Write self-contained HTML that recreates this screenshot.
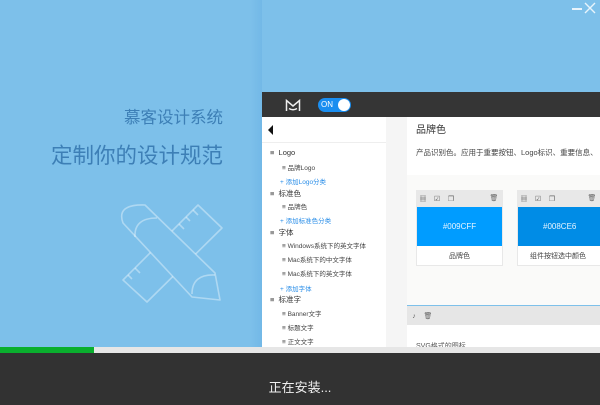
<!DOCTYPE html>
<html><head><meta charset="utf-8"><style>
*{margin:0;padding:0;box-sizing:border-box}
body{width:600px;height:405px;overflow:hidden;position:relative;background:#7dc0ea;font-family:"Liberation Sans","Noto Sans CJK SC",sans-serif}
.a{position:absolute}
.t1{right:377px;top:104px;font-size:16.5px;color:#3d7fb6;white-space:nowrap}
.t2{right:377px;top:139px;font-size:21.5px;color:#3d7fb6;white-space:nowrap}
.sb div{position:absolute;font-size:6.5px;color:#444;white-space:nowrap}
.sb .l1{left:270px;font-size:7.5px;color:#333}
.sb .l2{left:282px}
.sb .add{left:280px;color:#2a8ee8}
.ic{display:inline-block;font-size:7px;color:#666;width:14px;text-align:center}
</style></head><body>
<div class="a" style="left:250px;top:0;width:12px;height:347px;background:linear-gradient(90deg,rgba(100,175,225,0),rgba(95,170,225,.35))"></div>
<div class="a t1">慕客设计系统</div>
<div class="a t2">定制你的设计规范</div>
<svg class="a" style="left:0;top:0" width="260" height="347">
<g fill="none" stroke="rgba(255,255,255,.38)" stroke-width="1.6" stroke-linejoin="round">
<polygon points="198,205 222,228 147,302 123,280"/>
<path d="M193,210 l5,5 M186,217 l4,4 M179,224 l5,5 M135,268 l5,5 M128,275 l4,4"/>
<path d="M123,223 Q116,204 145,205 L215,273 L220,300 L192,297 Z" fill="#7dc0ea"/>
<path d="M135,237 Q134,218 157,218"/>
<path d="M192,294 Q192,274 215,275"/>
</g></svg>
<div class="a" style="left:572px;top:8px;width:10px;height:1.5px;background:#e8f4fc"></div>
<svg class="a" style="left:584px;top:2px" width="12" height="12"><path d="M1,1 L11,11 M11,1 L1,11" stroke="#e8f4fc" stroke-width="1.4"/></svg>
<!-- screenshot -->
<div class="a" style="left:262px;top:92px;width:338px;height:25px;background:#353535"></div>
<svg class="a" style="left:285px;top:99px" width="16" height="13"><path d="M1.5,12 V1.5 L8,7 L14.5,1.5 V12 M4,9.5 Q8,12 12,9.5" fill="none" stroke="#eee" stroke-width="1.5"/></svg>
<div class="a" style="left:318px;top:98px;width:33px;height:14px;border-radius:7px;background:#1a8ef0"></div>
<div class="a" style="left:321px;top:100px;font-size:8px;color:#fff">ON</div>
<div class="a" style="left:338px;top:99px;width:12px;height:12px;border-radius:6px;background:#fff"></div>
<div class="a" style="left:262px;top:117px;width:124px;height:230px;background:#fff"></div>
<div class="a" style="left:386px;top:117px;width:21px;height:230px;background:#f5f5f5"></div>
<div class="a" style="left:262px;top:142px;width:124px;height:1px;background:#eee"></div>
<svg class="a" style="left:268px;top:125px" width="6" height="10"><path d="M5,0 L0,5 L5,10Z" fill="#111"/></svg>
<div class="sb">
<div class="l1" style="top:148px">≡&nbsp;&nbsp;Logo</div>
<div class="l2" style="top:162px">≡ 品牌Logo</div>
<div class="add" style="top:176px">+ 添加Logo分类</div>
<div class="l1" style="top:188px">≡&nbsp;&nbsp;标准色</div>
<div class="l2" style="top:201px">≡ 品牌色</div>
<div class="add" style="top:215px">+ 添加标准色分类</div>
<div class="l1" style="top:227px">≡&nbsp;&nbsp;字体</div>
<div class="l2" style="top:240px">≡ Windows系统下的英文字体</div>
<div class="l2" style="top:254px">≡ Mac系统下的中文字体</div>
<div class="l2" style="top:268px">≡ Mac系统下的英文字体</div>
<div class="add" style="top:283px">+ 添加字体</div>
<div class="l1" style="top:294px">≡&nbsp;&nbsp;标准字</div>
<div class="l2" style="top:308px">≡ Banner文字</div>
<div class="l2" style="top:322px">≡ 标题文字</div>
<div class="l2" style="top:336px">≡ 正文文字</div>
</div>
<div class="a" style="left:407px;top:117px;width:193px;height:58px;background:#fff"></div>
<div class="a" style="left:407px;top:175px;width:193px;height:130px;background:#fafaf9"></div>
<div class="a" style="left:416px;top:121px;font-size:10px;color:#333">品牌色</div>
<div class="a" style="left:416px;top:147px;font-size:7.5px;color:#444;white-space:nowrap">产品识别色。应用于重要按钮、Logo标识、重要信息、</div>
<div class="a" style="left:416px;top:190px;width:87px;height:76px;background:#fff;border:1px solid #e8e8e8"></div>
<div class="a" style="left:416px;top:190px;width:87px;height:17px;background:#e8e8e8;font-size:8px;line-height:17px"><span class="ic">▦</span><span class="ic">☑</span><span class="ic">❐</span><span class="ic" style="position:absolute;right:2px">🗑</span></div>
<div class="a" style="left:417px;top:207px;width:85px;height:39px;background:#009cff;color:#e6f4ff;font-size:8px;text-align:center;line-height:39px">#009CFF</div>
<div class="a" style="left:417px;top:251px;width:85px;font-size:7px;color:#444;text-align:center">品牌色</div>
<div class="a" style="left:517px;top:190px;width:90px;height:76px;background:#fff;border:1px solid #e8e8e8"></div>
<div class="a" style="left:517px;top:190px;width:90px;height:17px;background:#e8e8e8;font-size:8px;line-height:17px"><span class="ic">▦</span><span class="ic">☑</span><span class="ic">❐</span><span class="ic" style="position:absolute;left:68px">🗑</span></div>
<div class="a" style="left:518px;top:207px;width:88px;height:39px;background:#008ce6;color:#e6f4ff;font-size:8px;line-height:39px;padding-left:25px">#008CE6</div>
<div class="a" style="left:530px;top:251px;font-size:7px;color:#444;white-space:nowrap">组件按钮选中颜色</div>
<div class="a" style="left:407px;top:306px;width:193px;height:19px;background:#e6e6e6;font-size:8px;line-height:19px;color:#555"><span class="ic">♪</span><span class="ic">🗑</span></div>
<div class="a" style="left:407px;top:325px;width:193px;height:22px;background:#fff"></div>
<div class="a" style="left:416px;top:341px;font-size:7px;color:#555;white-space:nowrap;height:6px;overflow:hidden">SVG格式的图标</div>
<!-- progress -->
<div class="a" style="left:0;top:347px;width:600px;height:6px;background:#e6e6e6"></div>
<div class="a" style="left:0;top:347px;width:94px;height:6px;background:#0aaf2e"></div>
<div class="a" style="left:0;top:353px;width:600px;height:52px;background:#323232"></div>
<div class="a" style="left:0;top:377px;width:600px;text-align:center;font-size:13px;color:#f0f0f0">正在安装...</div>
</body></html>
